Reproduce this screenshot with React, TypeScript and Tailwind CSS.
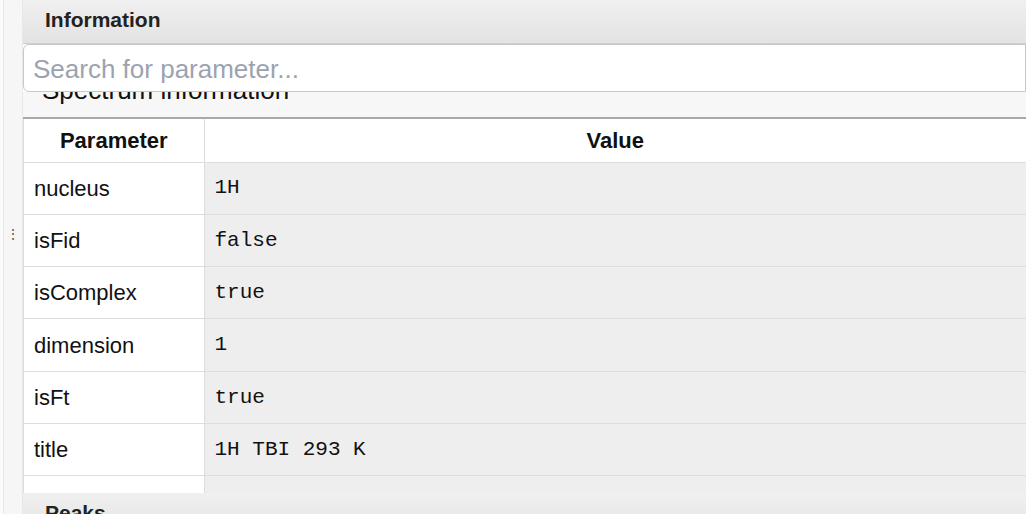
import React from "react";

type InfoRow = { name: string; value: string };

const rows: InfoRow[] = [
  { name: "nucleus", value: "1H" },
  { name: "isFid", value: "false" },
  { name: "isComplex", value: "true" },
  { name: "dimension", value: "1" },
  { name: "isFt", value: "true" },
  { name: "title", value: "1H TBI 293 K" },
  { name: "originFrequency", value: "400.13" },
];

function PanelHeader({ title }: { title: string }) {
  return (
    <div className="flex h-[44px] shrink-0 items-center border-b border-[#cdcdcd] bg-gradient-to-b from-[#f0f0f0] to-[#e3e3e3] pb-[4px] pl-[22px]">
      <span className="text-[21px] font-bold text-[#222]">{title}</span>
    </div>
  );
}

export default function App() {
  return (
    <div className="flex h-[514px] w-[1026px] overflow-hidden bg-white font-['Liberation_Sans',Arial,sans-serif] text-[#111]">
      {/* splitter strip with drag handle */}
      <div className="flex w-[23px] shrink-0">
        <div className="w-[3px] bg-[#fbfbfb]" />
        <div className="flex flex-1 justify-center border-l border-r border-[#e8e8e8] bg-[#f6f6f6] pt-[227px]">
          <span className="text-[14px] leading-none text-[#555]">⋮</span>
        </div>
      </div>

      <div className="flex min-w-0 flex-1 flex-col">
        <PanelHeader title="Information" />

        <input
          className="h-[48px] w-full shrink-0 rounded-l-[6px] border border-[#c8c8c8] bg-white px-[9px] pt-[2px] text-[26px] outline-none placeholder:text-[#9ca3af]"
          placeholder="Search for parameter..."
        />

        <div className="h-[27px] shrink-0 overflow-hidden border-b-2 border-[#a9a9a9] bg-[#f7f7f7] pl-[19px]">
          <div className="mt-[-15px] text-[26px] leading-[26px] text-[#111]">Spectrum information</div>
        </div>

        <div className="h-[374px] shrink-0 overflow-hidden border-l border-[#dddddd]">
          <table className="w-full border-collapse text-[22px]">
            <thead>
              <tr className="h-[43px] border-b border-[#dddddd]">
                <th className="w-[180px] border-r border-[#dddddd] font-bold">Parameter</th>
                <th className="font-bold">Value</th>
              </tr>
            </thead>
            <tbody>
              {rows.map((row) => (
                <tr key={row.name} className="h-[52.3px] border-b border-[#dddddd]">
                  <td className="border-r border-[#dddddd] bg-white pl-[10px]">{row.name}</td>
                  <td className="bg-[#eeeeee] pl-[10px] font-['Liberation_Mono','Courier_New',monospace] text-[21px]">
                    {row.value}
                  </td>
                </tr>
              ))}
            </tbody>
          </table>
        </div>

        <PanelHeader title="Peaks" />
      </div>
    </div>
  );
}
